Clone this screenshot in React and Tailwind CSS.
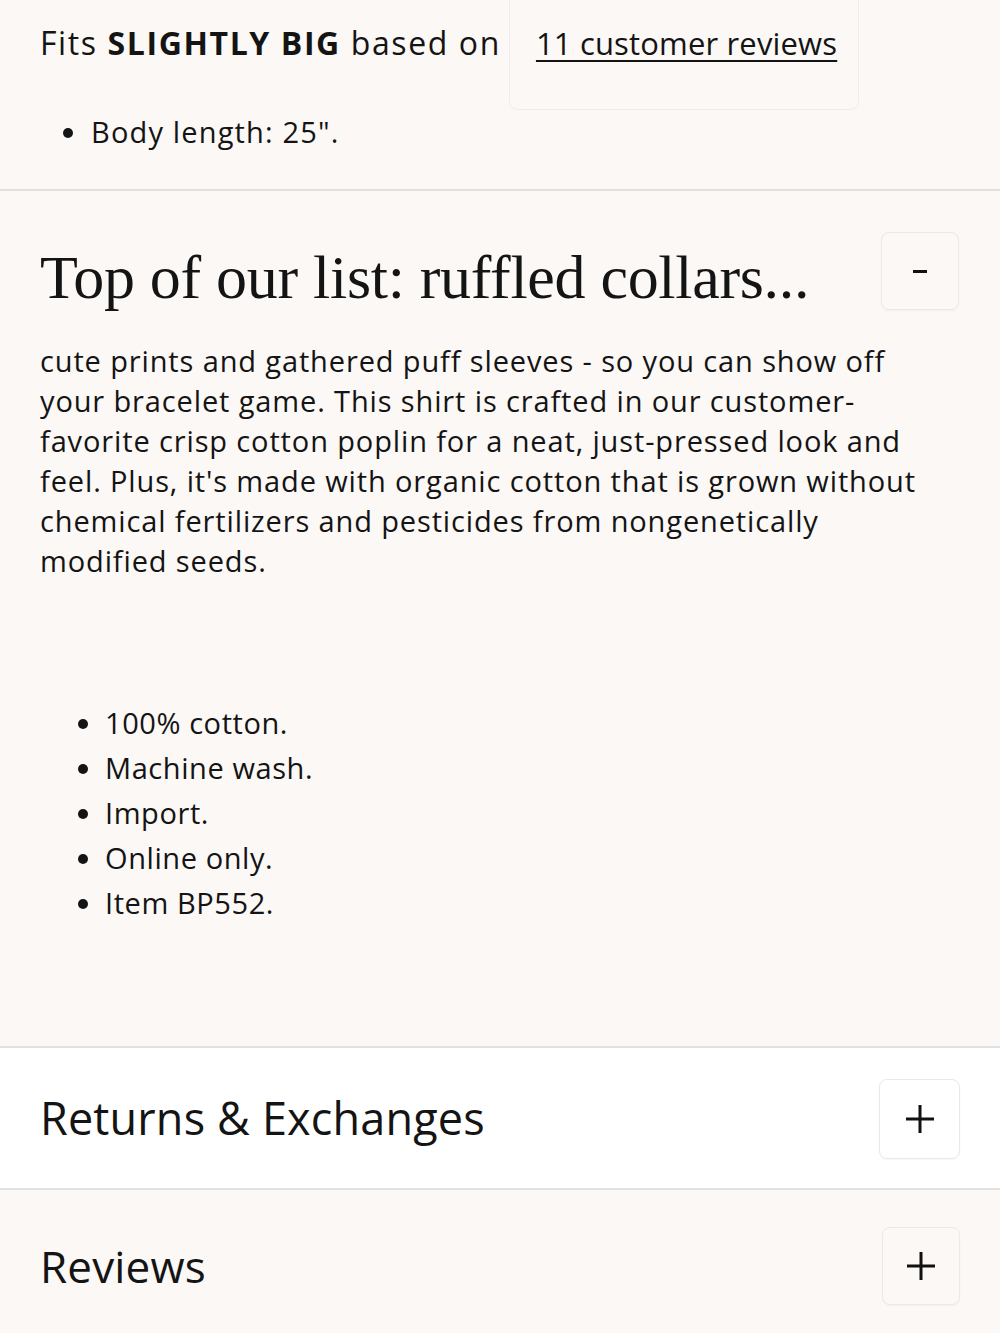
import React from "react";

const sans = { fontFamily: "'Open Sans', 'Noto Sans', sans-serif" };

function ToggleButton({ children, className = "" }) {
  return (
    <button
      className={`flex items-center justify-center w-[78px] h-[78px] rounded-[8px] border border-[#ebe8e6] shadow-[0_1px_2px_rgba(0,0,0,0.04)] text-[#111] ${className}`}
    >
      {children}
    </button>
  );
}

function Plus() {
  return (
    <svg width="32" height="32" viewBox="0 0 32 32" fill="none">
      <path d="M16 2v28M2 16h28" stroke="#111" strokeWidth="3" />
    </svg>
  );
}

export default function App() {
  return (
    <div className="w-[1000px] min-h-[1333px] bg-[#fbf8f6] text-[#141414] tracking-[0.01em]" style={sans}>
      {/* Fit summary */}
      <section className="h-[191px] border-b-2 border-[#e3e1df] pl-[40px]">
        <div className="flex items-start">
          <p className="text-[32px] leading-none pt-[27px] whitespace-nowrap tracking-[0.05em]">
            Fits <span className="font-bold">SLIGHTLY BIG</span> based on
          </p>
          <div className="ml-[8px] mt-[-10px] h-[120px] w-[350px] rounded-[8px] border border-[#efecea] flex items-start pl-[26px] pt-[37px]">
            <a className="text-[31px] leading-none underline underline-offset-[5px] decoration-2">
              11 customer reviews
            </a>
          </div>
        </div>
        <ul className="list-disc pl-[50px] mt-[2px] text-[29px] leading-[40px] tracking-[0.04em]">
          <li className="pl-[1px]">Body length: 25".</li>
        </ul>
      </section>

      {/* Description */}
      <section className="h-[857px] border-b-2 border-[#e3e1df] px-[40px] pt-[41px]">
        <div className="flex items-start justify-between">
          <h2
            className="text-[62px] leading-[78px] pt-[6px] tracking-[-0.3px]"
            style={{ fontFamily: "'Liberation Serif', 'Times New Roman', serif" }}
          >
            Top of our list: ruffled collars...
          </h2>
          <ToggleButton className="mr-[1px]">
            <span className="block w-[14px] h-[3px] bg-[#111]" />
          </ToggleButton>
        </div>
        <p className="mt-[25px] text-[29px] leading-[40px] w-[880px] tracking-[0.03em]">
          cute prints and gathered puff sleeves - so you can show off your bracelet game. This shirt is crafted in our customer-favorite crisp cotton poplin for a neat, just-pressed look and feel. Plus, it's made with organic cotton that is grown without chemical fertilizers and pesticides from nongenetically modified seeds.
        </p>
        <ul className="list-disc pl-[65px] mt-[119px] text-[29px] leading-[45px] tracking-[0.02em]">
          <li>100% cotton.</li>
          <li>Machine wash.</li>
          <li>Import.</li>
          <li>Online only.</li>
          <li>Item BP552.</li>
        </ul>
      </section>

      {/* Returns */}
      <section className="h-[142px] bg-white border-b-2 border-[#e3e1df] px-[40px] flex items-center justify-between">
        <h3 className="text-[45px]">Returns &amp; Exchanges</h3>
        <ToggleButton className="w-[81px] h-[80px] mt-[2px]">
          <Plus />
        </ToggleButton>
      </section>

      {/* Reviews */}
      <section className="h-[152px] px-[40px] flex items-center justify-between">
        <h3 className="text-[44px]">Reviews</h3>
        <ToggleButton>
          <Plus />
        </ToggleButton>
      </section>
    </div>
  );
}
